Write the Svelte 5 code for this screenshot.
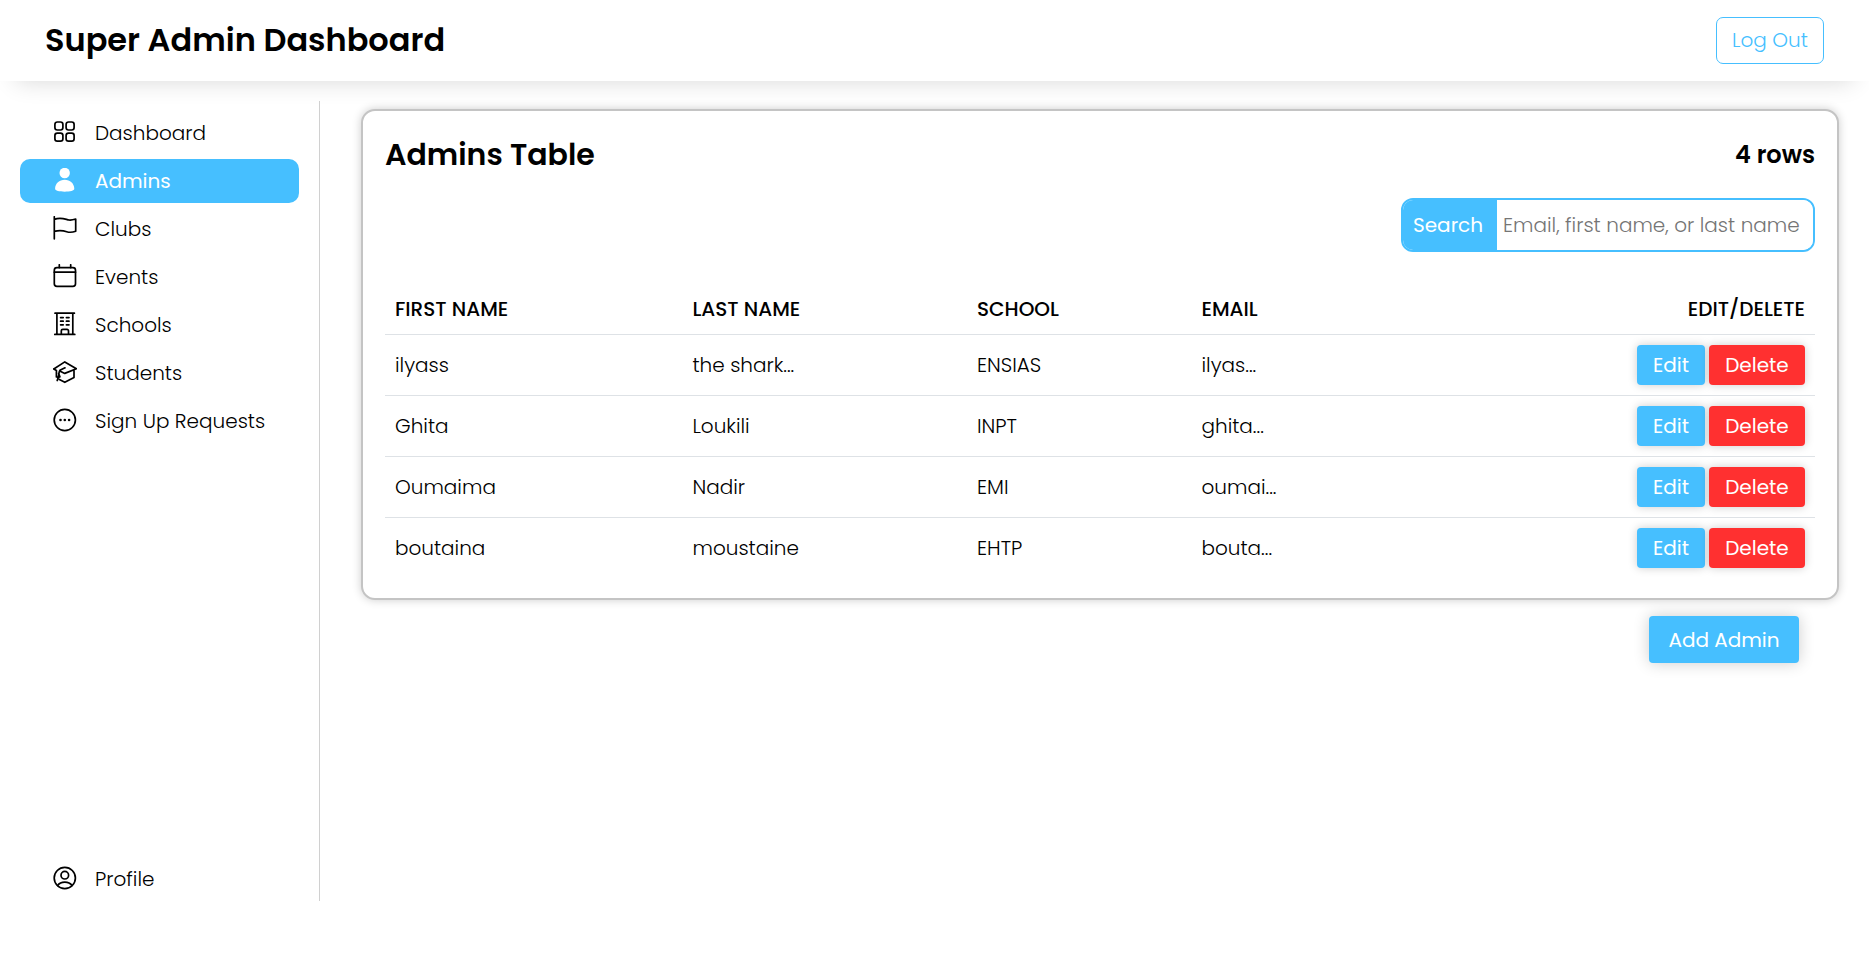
<script>
  const links = ['Dashboard', 'Admins', 'Clubs', 'Events', 'Schools', 'Students', 'Sign Up Requests'];
  let active = $state('Admins');
  let query = $state('');
  const admins = [
    { first: 'ilyass', last: 'the shark...', school: 'ENSIAS', email: 'ilyas...' },
    { first: 'Ghita', last: 'Loukili', school: 'INPT', email: 'ghita...' },
    { first: 'Oumaima', last: 'Nadir', school: 'EMI', email: 'oumai...' },
    { first: 'boutaina', last: 'moustaine', school: 'EHTP', email: 'bouta...' }
  ];
</script>

{#snippet icon(name)}
  <svg class="icon" viewBox="0 0 24 24" aria-hidden="true">
    {#if name === 'Dashboard'}
      <rect x="1.9" y="2" width="8" height="8" rx="2.4" />
      <rect x="13.1" y="2" width="8" height="8" rx="2.4" />
      <rect x="1.9" y="13.2" width="8" height="8" rx="2.4" />
      <rect x="13.1" y="13.2" width="8" height="8" rx="2.4" />
    {:else if name === 'Admins'}
      <circle class="solid" cx="11.7" cy="5" r="5.2" />
      <path class="solid" d="M2.1 20.8C2.1 15.6 6.4 11.8 11.7 11.8s9.6 3.8 9.6 9c0 1.8-4.3 2.9-9.6 2.900s-9.600-1.100-9.600-2.900Z" />
    {:else if name === 'Clubs'}
      <path d="M1.300 .8v22M1.300 3.400C8 .5 13 3.600 16 4c2.500.3 4.500-.3 6.700-1v12.200c-3.200 1.200-5.500 1.600-9 .5-4.500-1.500-8-1.400-12.400-.4" />
    {:else if name === 'Events'}
      <rect x="1.300" y="3.600" width="21.200" height="18.800" rx="2.600" />
      <path d="M1.300 8.200h21.200M6.300 .8v2.800M17.700 .8v2.800" />
    {:else if name === 'Schools'}
      <path d="M2 1.200h19.400M1.800 22.400h20M3.900 1.200v21.200M19.800 1.200v21.200M8.300 22.400v-3.600a1.500 1.500 0 0 1 1.500-1.500h4.200a1.500 1.500 0 0 1 1.500 1.500v3.600" />
      <path d="M7.600 5.600h2.600M13.400 5.600h2.600M7.600 9.200h2.600M13.400 9.200h2.600M7.600 12.800h2.600M13.400 12.800h2.600" />
    {:else if name === 'Students'}
      <path d="M.8 9 11.800 1.900 23.400 8.700 11.800 13.400 7.200 11.300M.8 9l2.600 1.500M21 10v7.500l-9.200 4.800-5.400-2.700M3.400 10.500v6.300M12 7.800 6.900 10.300C5.500 12 6.500 15 4.200 20.500M5.600 13.200l1.300 3.600M3.400 16.800l2.200 1" />
    {:else if name === 'Sign Up Requests'}
      <circle cx="11.800" cy="12" r="10.600" />
      <circle class="solid" cx="7.500" cy="12" r="1.300" />
      <circle class="solid" cx="11.800" cy="12" r="1.300" />
      <circle class="solid" cx="16.100" cy="12" r="1.300" />
    {:else}
      <circle cx="11.800" cy="12" r="10.600" />
      <circle cx="11.800" cy="9.200" r="3.800" />
      <path d="M4.600 19.500c1.600-2.300 4-3.400 7.200-3.400s5.600 1.100 7.200 3.400" />
    {/if}
  </svg>
{/snippet}

<div class="page">
  <header>
    <h1>Super Admin Dashboard</h1>
    <button class="logout">Log Out</button>
  </header>

  <div class="body">
    <nav>
      {#each links as name}
        <a href="#{name}" class:active={active === name} onclick={() => (active = name)}>
          {@render icon(name)}
          <span>{name}</span>
        </a>
      {/each}
      <a class="profile" href="#Profile">
        {@render icon('Profile')}
        <span>Profile</span>
      </a>
    </nav>

    <main>
      <section class="card">
        <div class="title">
          <h2>Admins Table</h2>
          <p>{admins.length} rows</p>
        </div>
        <form class="search" onsubmit={(e) => e.preventDefault()}>
          <button>Search</button>
          <input type="text" aria-label="Search admins" placeholder="Email, first name, or last name" bind:value={query} />
        </form>
        <table>
          <thead>
            <tr>
              <th class="first">FIRST NAME</th>
              <th class="last">LAST NAME</th>
              <th class="school">SCHOOL</th>
              <th>EMAIL</th>
              <th class="actions">EDIT/DELETE</th>
            </tr>
          </thead>
          <tbody>
            {#each admins as admin}
              <tr>
                <td>{admin.first}</td>
                <td>{admin.last}</td>
                <td>{admin.school}</td>
                <td>{admin.email}</td>
                <td>
                  <div class="buttons">
                    <button class="edit">Edit</button>
                    <button class="delete">Delete</button>
                  </div>
                </td>
              </tr>
            {/each}
          </tbody>
        </table>
      </section>
      <button class="add">Add Admin</button>
    </main>
  </div>
</div>

<style>
  :global(body) {
    margin: 0;
    background: #fff;
  }
  .page {
    --blue: #46bfff;
    box-sizing: border-box;
    min-height: 100vh;
    padding-bottom: 52px;
    display: flex;
    flex-direction: column;
    gap: 20px;
    color: #000;
    font: 300 20px/30px Poppins, Inter, sans-serif;
  }
  .page * {
    box-sizing: border-box;
  }
  button,
  input {
    font: inherit;
    margin: 0;
    white-space: nowrap;
  }
  button {
    cursor: pointer;
    border: 0;
    color: #fff;
    background: var(--blue);
    font-weight: 400;
    padding: 0;
  }
  h1,
  h2,
  p {
    margin: 0;
    font-weight: 600;
  }
  header {
    display: flex;
    align-items: flex-start;
    justify-content: space-between;
    padding: 17px 45px;
    background: #fff;
    box-shadow: 0 16px 24px -16px rgba(0, 0, 0, 0.16);
  }
  h1 {
    font-size: 32px;
    line-height: 46px;
  }
  .logout {
    width: 108px;
    height: 47px;
    padding-bottom: 2px;
    border: 1px solid var(--blue);
    border-radius: 7px;
    background: #fff;
    color: var(--blue);
    font-weight: 300;
  }
  .body {
    flex: 1;
    display: flex;
  }
  nav {
    flex: 0 0 320px;
    display: flex;
    flex-direction: column;
    gap: 4px;
    padding: 10px 20px 0;
    border-right: 1px solid #d0d0d0;
  }
  nav a {
    display: flex;
    align-items: center;
    gap: 18px;
    height: 44px;
    padding-left: 33px;
    border-radius: 10px;
    color: #000;
    text-decoration: none;
  }
  nav a.active {
    background: var(--blue);
    color: #fff;
    font-weight: 400;
  }
  .profile {
    margin-top: auto;
  }
  .icon {
    width: 24px;
    height: 24px;
    margin-bottom: 2px;
    fill: none;
    stroke: currentColor;
    stroke-width: 1.7;
    stroke-linecap: round;
    stroke-linejoin: round;
  }
  .solid {
    fill: currentColor;
    stroke: none;
  }
  main {
    flex: 1;
    min-width: 0;
    display: flex;
    flex-direction: column;
    padding: 8px 30px 0 41px;
  }
  .card {
    padding: 20px 22px;
    border: 2px solid #c4c4c4;
    border-radius: 14px;
    background: #fff;
    box-shadow: 0 0 10px rgba(0, 0, 0, 0.2);
  }
  .title {
    display: flex;
    align-items: center;
    justify-content: space-between;
    height: 48px;
  }
  h2 {
    font-size: 30px;
  }
  p {
    font-size: 24px;
  }
  .search {
    display: flex;
    width: 414px;
    height: 54px;
    margin: 19px 0 32px auto;
    border: 2px solid var(--blue);
    border-radius: 12px;
    overflow: hidden;
  }
  .search button {
    flex: 0 0 94px;
    padding-right: 4px;
  }
  .search input {
    flex: 1;
    min-width: 0;
    padding: 0 6px;
    border: 0;
    outline: 0;
  }
  .search input::placeholder {
    color: #757575;
  }
  table {
    width: 100%;
    table-layout: fixed;
    border-collapse: separate;
    border-spacing: 0;
  }
  th,
  td {
    padding: 10px;
    text-align: left;
    border-bottom: 1px solid #dee2e6;
  }
  th {
    font-weight: 500;
  }
  .first {
    width: 20.8%;
  }
  .last {
    width: 19.9%;
  }
  .school {
    width: 15.7%;
  }
  .actions {
    text-align: right;
  }
  tbody tr:last-child td {
    border-bottom: 0;
  }
  .buttons {
    display: flex;
    justify-content: flex-end;
    gap: 4px;
  }
  .buttons button {
    height: 40px;
    border-radius: 4px;
    box-shadow: 0 0 10px rgba(0, 0, 0, 0.2);
  }
  .edit {
    width: 68px;
  }
  .buttons .delete {
    width: 96px;
    background: #ff3030;
  }
  .add {
    align-self: flex-end;
    width: 150px;
    height: 47px;
    margin: 16px 40px 0 0;
    border-radius: 4px;
    box-shadow: 0 0 16px rgba(0, 0, 0, 0.2);
  }
</style>
